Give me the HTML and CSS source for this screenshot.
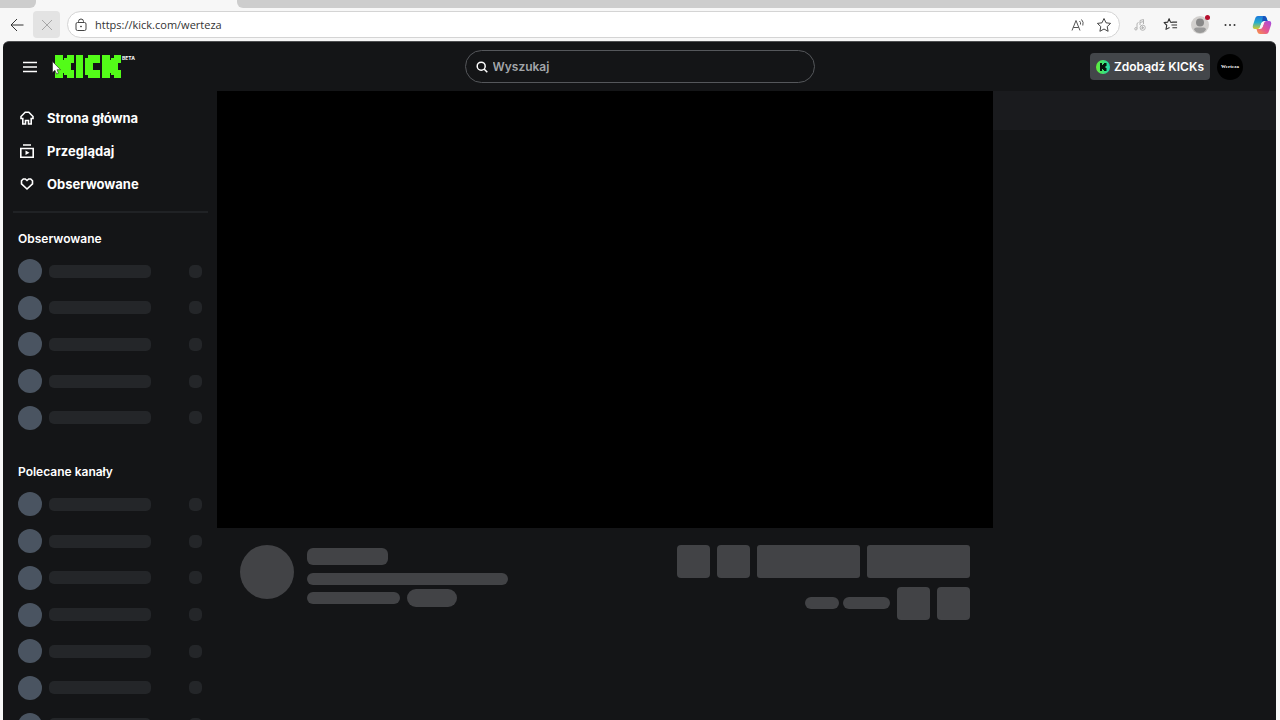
FILE: index.html
```html
<!DOCTYPE html>
<html lang="pl">
<head>
<meta charset="utf-8">
<meta name="viewport" content="width=device-width, initial-scale=1">
<title>werteza - Kick</title>
<link rel="stylesheet" href="styles.css">
</head>
<body>
<div class="browser">
  <div class="tabstrip"><span class="tab-left"></span><span class="tab-active"></span><span class="tab-right"></span></div>
  <div class="toolbar">
    <button class="tool back" aria-label="Wstecz"><svg width="14" height="14" viewBox="0 0 14 14" fill="none" stroke="#333"><path d="M13.500 7H1M7 1L1 7l6 6"/></svg></button>
    <button class="tool stop" aria-label="Zatrzymaj"><svg width="14" height="14" viewBox="0 0 14 14" fill="none" stroke="#a6a6a6"><path d="M2 2l10 10M12 2L2 12"/></svg></button>
    <div class="address">
      <svg width="12" height="14" viewBox="0 0 12 14" fill="none" stroke="#444"><rect x="1" y="4.500" width="10" height="8" rx="1.500"/><path d="M3.500 4.500V3.500a2.500 2.500 0 0 1 5 0v1"/><circle cx="6" cy="8.500" r=".5" fill="#444"/></svg>
      <input class="url" type="text" aria-label="Adres" value="https://kick.com/werteza">
      <button class="mini" aria-label="Czytaj na głos"><svg width="14" height="14" viewBox="0 0 14 14" fill="none" stroke="#555"><path d="M1 12.500L5 2.500l4 10M2.300 9.500h5.400M8.500 3q1.500 1.500 1 3.500M10.500 1.500q2.500 2.500 1.300 6"/></svg></button>
      <button class="mini" aria-label="Dodaj do ulubionych"><svg width="16" height="16" viewBox="0 0 16 16" fill="none" stroke="#444" stroke-linejoin="round"><path d="M8 1.500l2 4.300 4.600.6-3.400 3.200.9 4.700L8 12l-4.100 2.300.9-4.700L1.400 6.400 6 5.800z"/></svg></button>
    </div>
    <button class="tool" aria-label="Multimedia"><svg width="12" height="12" viewBox="0 0 12 12" fill="none" stroke="#b3b3b3"><path d="M3 9.500V4.500l1.500-1M6 6V1.500l3.500-1V5M6 3.500l3.500-1"/><circle cx="1.900" cy="9.800" r="1.200"/><circle cx="8.700" cy="8.700" r="2.600"/><path d="M8 7.500l1.800 1.200L8 9.900z" fill="#b3b3b3"/></svg></button>
    <button class="tool" aria-label="Ulubione"><svg width="15" height="15" viewBox="0 0 16 16" fill="none" stroke="#333" stroke-linejoin="round" stroke-width="1.200"><path d="M10 5.700L8 5.500 6.500 1.800 5 5.500l-3.800.5L4 8.800l-.8 4.400 3.800-2M10 5.500h5M9 8.500h6M10 11.500h5"/></svg></button>
    <button class="tool profile" aria-label="Profil"><svg width="18" height="18" viewBox="0 0 18 18"><circle cx="9" cy="9" r="9" fill="#d2d0ce"/><circle cx="9" cy="6.500" r="4" fill="#888"/><path d="M3 13.500q.3-2 2.500-2h7q2.200 0 2.500 2Q13 17 9 17t-6-3.500z" fill="#999"/></svg><span class="alert"></span></button>
    <button class="tool" aria-label="Więcej"><svg width="14" height="4" viewBox="0 0 14 4" fill="#333"><circle cx="2.500" cy="2" r="1"/><circle cx="7" cy="2" r="1"/><circle cx="11.500" cy="2" r="1"/></svg></button>
    <button class="tool copilot" aria-label="Copilot"><svg width="20" height="20" viewBox="0 0 20 20"><defs><linearGradient id="cool" x1="0" y1="0" x2="0" y2="1"><stop offset="0" stop-color="#1d78dc"/><stop offset=".5" stop-color="#27aecd"/><stop offset="1" stop-color="#d6cb2c"/></linearGradient><linearGradient id="warm" x1="1" y1="0" x2="0" y2="1"><stop offset="0" stop-color="#a34ce4"/><stop offset=".55" stop-color="#e6578f"/><stop offset="1" stop-color="#f89b43"/></linearGradient></defs><path d="M6 1h6q2 0 2.600 2l1 3H12q-2 0-2.600 2l-1.400 4q-.6 2-2.500 2H3q-3 0-2-4l2-6Q3.700 1 6 1z" fill="url(#cool)"/><path d="M11 1h1q2 0 2.600 2l1 3H12q-1.500 0-2 1z" fill="#1754bd"/><path d="M14 19H8q-2 0-2.600-2l-.9-3H8q2 0 2.600-2L12 8q.6-2 2.500-2H17q3 0 2 4l-2 6q-.7 3-3 3z" fill="url(#warm)"/><path d="M9.500 8h2.200l-1.200 4H8.200z" fill="#f7f7f7"/></svg></button>
  </div>

  <div class="app">
    <header class="topbar">
      <div class="brand">
        <button class="menu" aria-label="Menu"><svg width="14" height="12" viewBox="0 0 14 12" stroke="#fff" stroke-width="1.600"><path d="M0 1.500h14M0 6h14M0 10.500h14"/></svg></button>
        <a class="logo" href="#" aria-label="Kick">
          <svg width="66" height="23" viewBox="0 0 66 23" fill="#53fc18">
            <defs><g id="block-k"><rect width="8" height="23"/><rect x="7" y="5" width="3" height="13"/><rect x="9" y="3" width="4" height="17"/><rect x="12" width="7" height="8"/><rect x="12" y="7" width="4" height="9"/><rect x="12" y="15" width="7" height="8"/></g></defs>
            <use href="#block-k"/><rect x="21" width="7" height="23"/>
            <rect x="30" y="3" width="8" height="17"/><rect x="33" width="12" height="8"/><rect x="33" y="15" width="12" height="8"/>
            <use href="#block-k" x="47"/>
          </svg>
          <span class="beta">BETA</span>
        </a>
        <svg class="cursor" width="9" height="14" viewBox="0 0 9 14"><path d="M.5.500v11l2.500-2.200L4.600 13l1.900-.8L5 8.700h3.500z" fill="#fff" stroke="#222" stroke-width=".6"/></svg>
      </div>
      <label class="search">
        <svg width="12" height="12" viewBox="0 0 12 12" fill="none" stroke="#fff" stroke-width="1.500"><circle cx="5.200" cy="5.200" r="4"/><path d="M8 8l3.300 3.300"/></svg>
        <input type="text" placeholder="Wyszukaj" aria-label="Wyszukaj">
      </label>
      <div class="account">
        <button class="kicks"><svg width="14" height="14" viewBox="0 0 14 14"><defs><linearGradient id="coin"><stop offset="0" stop-color="#63ef35"/><stop offset="1" stop-color="#1ed6ad"/></linearGradient></defs><circle cx="7" cy="7" r="7" fill="url(#coin)"/><path d="M4 3h2v2h1V4h1V3h2.500v3h-1v2h1v3H8v-1H7V9H6v2H4z" fill="#07150d"/></svg>Zdobądź KICKs</button>
        <button class="avatar" aria-label="Konto">Werteza</button>
      </div>
    </header>

    <div class="body">
      <aside class="sidebar">
        <nav class="nav">
          <a href="#"><svg width="14" height="14" viewBox="0 0 14 14" fill="none" stroke="#fff" stroke-width="1.600"><path d="M2.800 13V7.500H1V5.500L5.200 1.300h3.600L13 5.500v2h-1.800V13H8.500V9.500h-3V13z"/></svg>Strona główna</a>
          <a href="#"><svg width="14" height="14" viewBox="0 0 14 14" fill="none" stroke="#fff" stroke-width="1.600"><path d="M3 1h8M.8 4.500h12.400v8.700H.8z"/><path d="M5.500 6.500l4 2.300-4 2.300z" fill="#fff" stroke="none"/></svg>Przeglądaj</a>
          <a href="#"><svg width="14" height="14" viewBox="0 0 14 14" fill="none" stroke="#fff" stroke-width="1.600"><path d="M7 12L1.500 6.800V3.800L3.300 2h2L7 3.500 8.700 2h2l1.800 1.800v3z"/></svg>Obserwowane</a>
        </nav>
        <section class="channels">
          <h2>Obserwowane</h2>
          <ul class="rows five">
            <li><i></i><b></b><s></s></li><li><i></i><b></b><s></s></li><li><i></i><b></b><s></s></li><li><i></i><b></b><s></s></li><li><i></i><b></b><s></s></li>
          </ul>
        </section>
        <section class="channels">
          <h2>Polecane kanały</h2>
          <ul class="rows seven">
            <li><i></i><b></b><s></s></li><li><i></i><b></b><s></s></li><li><i></i><b></b><s></s></li><li><i></i><b></b><s></s></li><li><i></i><b></b><s></s></li><li><i></i><b></b><s></s></li><li><i></i><b></b><s></s></li>
          </ul>
        </section>
      </aside>

      <main class="stream">
        <div class="player"></div>
        <div class="info">
          <div class="who">
            <span class="bone face"></span>
            <div class="lines">
              <span class="bone name"></span>
              <span class="bone title"></span>
              <div class="tags"><span class="bone category"></span><span class="bone tag"></span></div>
            </div>
          </div>
          <div class="actions">
            <div class="action-row"><span class="bone square"></span><span class="bone square"></span><span class="bone wide"></span><span class="bone wide"></span></div>
            <div class="action-row"><div class="stats"><span class="bone viewers"></span><span class="bone uptime"></span></div><span class="bone square"></span><span class="bone square"></span></div>
          </div>
        </div>
      </main>

      <aside class="chat"><div class="chat-head"></div></aside>
    </div>
  </div>
</div>
</body>
</html>
```

FILE: styles.css
```css
* { box-sizing: border-box; }

body {
  margin: 0;
  background: #f7f7f7;
  color: #fff;
  font-family: Inter, "Liberation Sans", sans-serif;
}

button, input {
  margin: 0;
  padding: 0;
  border: 0;
  background: none;
  color: inherit;
  font: inherit;
}

svg { display: block; flex: none; }

.browser {
  display: flex;
  flex-direction: column;
  height: 100vh;
  overflow: hidden;
}

/* Browser frame */
.tabstrip {
  display: flex;
  flex: none;
  height: 8px;
  background: #f7f7f7;
}
.tab-left { width: 36px; background: #cdcdcd; border-bottom-right-radius: 6px; }
.tab-active { width: 201px; background: #f7f7f7; }
.tab-right { flex: 1; background: #cdcdcd; border-bottom-left-radius: 6px; }

.toolbar {
  display: flex;
  flex: none;
  align-items: center;
  height: 33px;
  padding: 0 1px 0 0;
}
.tool {
  display: grid;
  place-items: center;
  flex: none;
  width: 30px;
  height: 27px;
}
.back { width: 33px; }
.stop { width: 27px; border-radius: 4px; background: #e3e3e3; }
.copilot { width: 34px; }
.address {
  display: flex;
  flex: 1;
  align-items: center;
  gap: 8px;
  height: 27px;
  margin: 0 5px 0 7px;
  padding: 0 7px;
  border: 1px solid #d4d4d4;
  border-radius: 14px;
  background: #fff;
}
.url {
  flex: 1;
  min-width: 0;
  color: #333;
  font-family: "Open Sans", "Noto Sans", sans-serif;
  font-size: 11px;
}
.mini { margin-left: 3px; }
.profile { position: relative; }
.alert {
  position: absolute;
  top: 4px;
  right: 5px;
  width: 5px;
  height: 5px;
  border-radius: 50%;
  background: #b50e2c;
}

/* Application */
.app {
  display: flex;
  flex: 1;
  flex-direction: column;
  min-height: 0;
  margin: 0 4px 0 3px;
  border-top: 1px solid #4d4e50;
  border-radius: 6px 6px 0 0;
  background: #141517;
  overflow: hidden;
}
.topbar {
  display: grid;
  grid-template-columns: 1fr 350px 1fr;
  flex: none;
  align-items: center;
  height: 49px;
}
.brand {
  position: relative;
  display: flex;
  align-items: center;
  gap: 18px;
  padding-left: 20px;
}
.logo { display: flex; gap: 1px; text-decoration: none; }
.beta { color: #fff; font-size: 5px; font-weight: 700; line-height: 6px; }
.cursor { position: absolute; top: 6px; left: 49px; }

.search {
  display: flex;
  align-items: center;
  gap: 5px;
  height: 33px;
  padding: 0 10px;
  border: 1px solid #55575b;
  border-radius: 17px;
}
.search input {
  flex: 1;
  min-width: 0;
  outline: 0;
  font-size: 12px;
  font-weight: 600;
}
.search input::placeholder { color: #a2a5a9; opacity: 1; }

.account {
  display: flex;
  align-items: center;
  justify-content: flex-end;
  gap: 7px;
  padding-right: 33px;
}
.kicks {
  display: flex;
  align-items: center;
  gap: 4px;
  height: 27px;
  padding: 0 6px;
  border-radius: 4px;
  background: #43464a;
  font-size: 12px;
  font-weight: 600;
}
.avatar {
  width: 26px;
  height: 26px;
  border-radius: 50%;
  background: #000;
  font-family: "Liberation Serif", serif;
  font-size: 5px;
  font-weight: 700;
}

.body {
  display: grid;
  grid-template-columns: 214px 1fr 283px;
  flex: 1;
  min-height: 0;
}

/* Sidebar */
.sidebar { min-height: 0; padding-left: 10px; overflow: hidden; }
.nav {
  margin-right: 9px;
  padding: 10px 0 11px;
  border-bottom: 2px solid #202225;
}
.nav a {
  display: flex;
  align-items: center;
  gap: 13px;
  height: 33px;
  padding-left: 7px;
  color: #fff;
  font-size: 13px;
  font-weight: 700;
  text-decoration: none;
}
.channels { padding: 17px 15px 0 5px; }
.channels + .channels { padding-top: 27px; }
.channels h2 {
  margin: 0 0 5px;
  font-size: 12px;
  font-weight: 600;
  line-height: 18px;
}
.rows {
  display: flex;
  flex-direction: column;
  margin: 0;
  padding: 0;
  list-style: none;
}
.five { height: 183px; }
.seven { height: 257px; }
.rows li { display: flex; flex: 1; align-items: center; }
.rows i { width: 24px; height: 24px; border-radius: 50%; background: #4a5461; }
.rows b { width: 102px; height: 13px; margin-left: 7px; border-radius: 5px; background: #242629; }
.rows s { width: 13px; height: 13px; margin-left: auto; border-radius: 5px; background: #242629; }

/* Stream */
.player { aspect-ratio: 16 / 9; background: #000; }
.info {
  display: flex;
  justify-content: space-between;
  padding: 17px 23px;
}
.bone { display: block; border-radius: 6px; background: #424346; }
.who { display: flex; gap: 13px; }
.face { width: 54px; height: 54px; border-radius: 50%; }
.lines { padding-top: 3px; }
.name { width: 81px; height: 17px; margin-bottom: 8px; }
.title { width: 201px; height: 12px; margin-bottom: 4px; }
.tags { display: flex; align-items: center; gap: 7px; }
.category { width: 93px; height: 12px; }
.tag { width: 50px; height: 18px; border-radius: 9px; }
.actions { display: flex; flex-direction: column; gap: 9px; }
.action-row {
  display: flex;
  align-items: center;
  justify-content: flex-end;
  gap: 7px;
}
.square { width: 33px; height: 33px; border-radius: 4px; }
.wide { width: 103px; height: 33px; border-radius: 3px; }
.stats { display: flex; gap: 4px; }
.viewers { width: 34px; height: 12px; }
.uptime { width: 47px; height: 12px; }

/* Chat */
.chat-head { height: 39px; background: #1a1b1e; }
```
